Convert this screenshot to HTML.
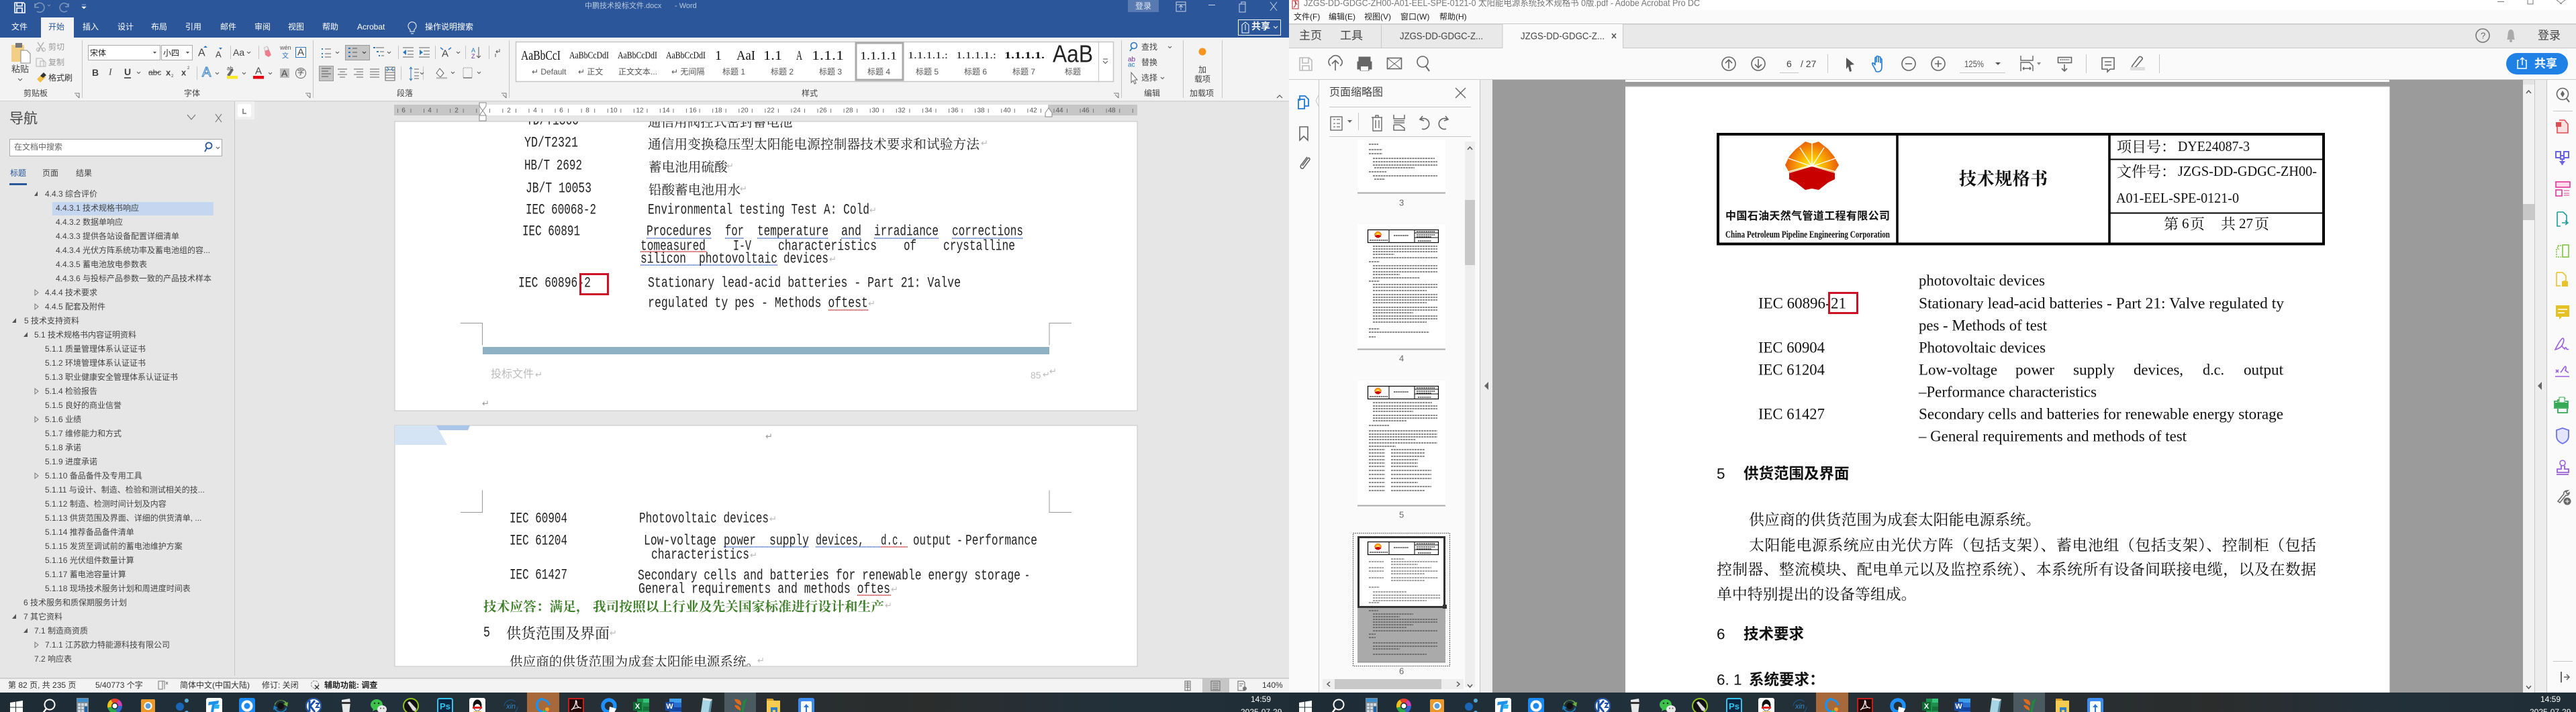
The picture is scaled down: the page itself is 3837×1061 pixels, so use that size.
<!DOCTYPE html>
<html lang="zh"><head><meta charset="utf-8"><title>Word and Acrobat</title>
<style>
html,body{margin:0;padding:0;width:3837px;height:1061px;overflow:hidden;background:#e6e6e6}
svg{display:block;position:absolute;left:0;top:0;font:12px "Liberation Sans","Noto Sans CJK SC",sans-serif}
text{dominant-baseline:central;fill:#444;white-space:pre}
.m{font:22px "Liberation Mono",monospace;fill:#222}
.c{font:19.6px "Noto Serif CJK SC",serif;fill:#222}
.s{font:23px "Liberation Serif",serif;fill:#111}
.p{font:22.9px "Noto Serif CJK SC",serif;fill:#111}
.h{font:bold 22.5px "Liberation Sans","Noto Sans CJK SC",sans-serif;fill:#111}
.w{fill:#fff}
.g{fill:#999}
.r{font-size:10px;fill:#555;text-anchor:middle}
.a{fill:#bbb;font-size:13px}
.n{fill:#444}
.pv{font:20px "Liberation Serif",serif;fill:#111}
.l{fill:#555}
.i{fill:none;stroke:#666;stroke-width:1.6}
.ib{fill:none;stroke:#555;stroke-width:1.2}
.sep{stroke:#c6c6c6;stroke-width:1}
.th{stroke:#222;stroke-width:1.3;stroke-dasharray:3 .9;fill:none;opacity:.85}
</style></head><body>
<svg width="3837" height="1061" viewBox="0 0 3837 1061">
<defs>
<linearGradient id="tg" x1="0" x2="1" y1="0" y2="0"><stop offset="0" stop-color="#1e2c36"/><stop offset=".3" stop-color="#21303a"/><stop offset=".72" stop-color="#2b2d2d"/><stop offset=".85" stop-color="#23303a"/><stop offset="1" stop-color="#1f2e37"/></linearGradient>
<radialGradient id="lg" gradientUnits="userSpaceOnUse" cx="40" cy="38" r="40"><stop offset="0" stop-color="#fff7a0"/><stop offset=".25" stop-color="#ffd400"/><stop offset=".6" stop-color="#f79a00"/><stop offset="1" stop-color="#e8590c"/></radialGradient>
<symbol id="logo" viewBox="0 0 80 73">
<path d="M30 1 40 4 50 1 64 12 73 23 80 36 73 47 40 37 6 47 0 36 6 23 16 12Z" fill="url(#lg)"/>
<path d="M6 48 40 38 74 48 74 57 64 62 50 73 40 71 30 73 16 62 6 57Z" fill="#c80000"/>
<path d="M40 38 22 10M40 38 5 26M40 38 40 3M40 38 58 10M40 38 75 26M4 46 40 36 76 46" stroke="#fff" stroke-width="1.3" fill="none"/>
</symbol>
<g id="tt"><rect x="15.5" y="8.5" width="105" height="19" fill="#fff" stroke="#000" stroke-width="1.2"/><path d="M47 8v20M85 8v20M85 13h36M85 20h36" stroke="#000"/><use href="#logo" x="25" y="10" width="11" height="11"/><path d="M18 24h27M54 17h22M88 11h28M88 16h28M88 19h22M90 25h20" stroke="#111" stroke-width="1.300" stroke-dasharray="2 .8"/></g>
<symbol id="t0" viewBox="0 0 24 24"><path d="M3 7 11 5.8v7.7H3ZM12 5.6 22 4v9.5H12ZM3 14.5h8v7.7L3 21ZM12 14.5h10V24L12 22.4Z" fill="#fff"/></symbol>
<symbol id="t1" viewBox="0 0 24 24"><circle cx="13" cy="10" r="7.5" fill="none" stroke="#fff" stroke-width="2"/><path d="M8 16 2 24" stroke="#fff" stroke-width="2.4"/></symbol>
<symbol id="t2" viewBox="0 0 24 24"><rect x="3" y="0" width="18" height="24" fill="#7c8b96"/><rect x="4" y="1" width="16" height="5" fill="#3c8fd0"/><path d="M5 8h4v4H5zM10 8h4v4h-4zM15 8h4v4h-4zM5 13h4v4H5zM10 13h4v4h-4zM5 18h4v4H5zM10 18h4v4h-4z" fill="#cfd8de"/><rect x="15" y="13" width="4" height="9" fill="#1e5fa8"/></symbol>
<symbol id="t3" viewBox="0 0 24 24"><g fill="none" stroke-width="6"><circle cx="12" cy="12" r="8" stroke="#36c" stroke-dasharray="10 60"/><circle cx="12" cy="12" r="8" stroke="#2ca84a" stroke-dasharray="13 60" stroke-dashoffset="-10"/><circle cx="12" cy="12" r="8" stroke="#f3c21a" stroke-dasharray="10 60" stroke-dashoffset="-23"/><circle cx="12" cy="12" r="8" stroke="#e8402e" stroke-dasharray="9 60" stroke-dashoffset="-33"/><circle cx="12" cy="12" r="8" stroke="#d23fb0" stroke-dasharray="9 60" stroke-dashoffset="-42"/></g><circle cx="12" cy="12" r="3.5" fill="#fff"/></symbol>
<symbol id="t4" viewBox="0 0 24 24"><rect x="2" y="2" width="21" height="20" rx="2" fill="#ea9a2c"/><circle cx="12.5" cy="12" r="6" fill="#fff"/><circle cx="12.5" cy="12" r="4" fill="#5a9ad6"/></symbol>
<symbol id="t5" viewBox="0 0 24 24"><circle cx="9" cy="13" r="6" fill="#1a65b8"/><circle cx="19" cy="4" r="3" fill="#5ba8d8"/><circle cx="19" cy="22" r="3" fill="#5ba8d8"/></symbol>
<symbol id="t6" viewBox="0 0 24 24"><rect width="24" height="24" rx="3" fill="#fff"/><path d="M4 6 19 4 18 9 13 10 11 21 7 21 9 10 3 11Z" fill="#1e90e6"/><path d="M13 10h7l-1 6h-7z" fill="#2ab5ee"/></symbol>
<symbol id="t7" viewBox="0 0 24 24"><rect width="24" height="24" rx="3" fill="#1b8af0"/><circle cx="12" cy="12" r="6.5" fill="none" stroke="#fff" stroke-width="4"/></symbol>
<symbol id="t8" viewBox="0 0 24 24"><path d="M4 12a8 8 0 0 1 15-4l-3 1 6 4 1-7-2 1A11 11 0 0 0 3 9Z" fill="#6cb33f"/><path d="M20 12a8 8 0 0 1-15 4l3-1-6-4-1 7 2-1a11 11 0 0 0 18 0Z" fill="#1a7fc2"/><circle cx="12" cy="12" r="5" fill="#111"/></symbol>
<symbol id="t9" viewBox="0 0 24 24"><circle cx="12" cy="12" r="12" fill="#fff"/><circle cx="12" cy="12" r="11" fill="none" stroke="#1b4fa8" stroke-width="2"/><path d="M6 4v16M7 12 14 4M7 12l7 9" stroke="#1b4fa8" stroke-width="3" fill="none"/><path d="M15 8h5l-4 6h5" stroke="#1b4fa8" stroke-width="2" fill="none"/></symbol>
<symbol id="t10" viewBox="0 0 24 24"><path d="M6 3 18 1 19 7 17 24H8L6 7Z" fill="#e8e8e8"/><path d="M6 6h13v3H6z" fill="#333"/></symbol>
<symbol id="t11" viewBox="0 0 24 24"><ellipse cx="9" cy="10" rx="9" ry="8" fill="#3cc24a"/><path d="M4 15 3 20 8 17Z" fill="#3cc24a"/><circle cx="6" cy="8" r="1.2" fill="#123"/><circle cx="12" cy="8" r="1.2" fill="#123"/><ellipse cx="17" cy="17" rx="7" ry="6" fill="#e8e8e8"/><circle cx="15" cy="15.5" r="1" fill="#555"/><circle cx="19.500" cy="15.5" r="1" fill="#555"/></symbol>
<symbol id="t12" viewBox="0 0 24 24"><circle cx="12" cy="12" r="11" fill="#111" stroke="#8fc31f" stroke-width="2"/><path d="M7 7l3-2 10 11-1 4-4-1Z" fill="#ddd"/></symbol>
<symbol id="t13" viewBox="0 0 24 24"><rect x="1" y="1" width="22" height="22" rx="2.500" fill="#0b2540" stroke="#31c5f0" stroke-width="2"/><text x="12" y="12.500" text-anchor="middle" font-size="13" font-weight="bold" style="fill:#31c5f0">Ps</text></symbol>
<symbol id="t14" viewBox="0 0 24 24"><rect width="24" height="24" rx="3" fill="#fff"/><ellipse cx="12" cy="11" rx="6.500" ry="8.500" fill="#111"/><ellipse cx="12" cy="14" rx="4.500" ry="5" fill="#fff"/><path d="M5 13h14v3H5z" fill="#e02020"/><path d="M7 20h4v3H5zM13 20h4l2 3h-6z" fill="#f5a623"/></symbol>
<symbol id="t15" viewBox="0 0 24 24"><circle cx="12" cy="13" r="10" fill="none" stroke="#1b5a92" stroke-width="1" stroke-dasharray="22 10"/><text x="12" y="13" text-anchor="middle" font-size="11" font-style="italic" style="fill:#2f86c8">xin</text></symbol>
<symbol id="t16" viewBox="0 0 24 24"><path d="M12 1a10 10 0 1 0 5 19" fill="none" stroke="#1e90ee" stroke-width="3.600"/><path d="M12 3a9 9 0 0 1 9 8" fill="none" stroke="#1e90ee" stroke-width="3"/><circle cx="18" cy="17" r="3" fill="#f2a01e"/><circle cx="13" cy="21" r="2.500" fill="#3dc15a"/><circle cx="22" cy="22" r="2.500" fill="#e84a3a"/></symbol>
<symbol id="t17" viewBox="0 0 24 24"><rect x="1" y="1" width="22" height="22" fill="#220808" stroke="#c0201c" stroke-width="2"/><path d="M5 18C9 15 12 9 11.500 5 11 3 13.500 4 13 8 12.500 12 16 15 20 15M7 16 17 14" fill="none" stroke="#f4e8e8" stroke-width="1.400"/></symbol>
<symbol id="t18" viewBox="0 0 24 24"><circle cx="12" cy="12" r="9" fill="none" stroke="#1e90ff" stroke-width="5.500"/><path d="M13 13 23 16 18 26 12 22Z" fill="#fff"/></symbol>
<symbol id="t19" viewBox="0 0 24 24"><rect x="6" y="1" width="18" height="23" fill="#1f8f4e"/><rect x="15" y="1" width="9" height="6" fill="#34c17a"/><rect x="15" y="13" width="9" height="6" fill="#15703a"/><rect x="0" y="6" width="13" height="13" fill="#0f6b36"/><text x="6.500" y="12.800" text-anchor="middle" font-size="11" font-weight="bold" class="w">X</text></symbol>
<symbol id="t20" viewBox="0 0 24 24"><rect x="6" y="1" width="18" height="23" fill="#2a6fd0"/><rect x="6" y="1" width="18" height="6" fill="#3fa0ee"/><rect x="6" y="14" width="18" height="6" fill="#16439c"/><rect x="0" y="6" width="13" height="13" fill="#184da6"/><text x="6.500" y="12.800" text-anchor="middle" font-size="11" font-weight="bold" class="w">W</text></symbol>
<symbol id="t21" viewBox="0 0 24 24"><path d="M6 0 20 2 17 24 3 21Z" fill="#a8d6e4"/><path d="M6 0 20 2 19 5 6 3Z" fill="#e8e8e8"/><path d="M17 6 20 2 17 24 14 23Z" fill="#5b8ea0"/></symbol>
<symbol id="t22" viewBox="0 0 24 24"><path d="M3 2C9 1 14 4 13 11 8 9 5 8 3 2ZM3 11C7 10 13 13 12 19 8 17 5 16 3 11Z" fill="#e0691a"/><path d="M22 0C19 8 17 14 16 24H9C13 21 15 14 16 5Z" fill="#1b8a3e"/></symbol>
<symbol id="t23" viewBox="0 0 24 24"><path d="M2 1h9l2 3h9v20H2Z" fill="#f8cc52"/><path d="M2 1h9l2 3H2Z" fill="#d59b22"/><rect x="8" y="14" width="10" height="10" fill="#2f81c6"/><rect x="11" y="18" width="4" height="6" fill="#f8cc52"/></symbol>
<symbol id="t24" viewBox="0 0 24 24"><rect width="24" height="24" rx="3" fill="#3b8cf2"/><rect x="4" y="5" width="16" height="19" rx="2" fill="#fff"/><path d="M12 9l-4 5h3v8h2v-8h3z" fill="#2a76d8"/></symbol>
<g id="tb">
<rect x="785" y="1032" width="48" height="29" fill="#a7683a"/><rect x="1079" y="1032" width="47" height="29" fill="#4b5960"/>
<use href="#t0" x="12" y="1040" width="24" height="24"/><use href="#t1" x="61" y="1040" width="24" height="24"/><use href="#t2" x="111" y="1040" width="24" height="24"/><use href="#t3" x="159" y="1040" width="24" height="24"/><use href="#t4" x="208" y="1040" width="24" height="24"/><use href="#t5" x="259" y="1040" width="24" height="24"/><use href="#t6" x="307" y="1040" width="24" height="24"/><use href="#t7" x="356" y="1040" width="24" height="24"/><use href="#t8" x="406" y="1040" width="24" height="24"/><use href="#t9" x="455" y="1040" width="24" height="24"/><use href="#t10" x="503" y="1040" width="24" height="24"/><use href="#t11" x="552" y="1040" width="24" height="24"/><use href="#t12" x="600" y="1040" width="24" height="24"/><use href="#t13" x="651" y="1040" width="24" height="24"/><use href="#t14" x="699" y="1040" width="24" height="24"/><use href="#t15" x="749" y="1040" width="24" height="24"/><use href="#t16" x="797" y="1040" width="24" height="24"/><use href="#t17" x="846" y="1040" width="24" height="24"/><use href="#t18" x="895" y="1040" width="24" height="24"/><use href="#t19" x="943" y="1040" width="24" height="24"/><use href="#t20" x="991" y="1040" width="24" height="24"/><use href="#t21" x="1041" y="1040" width="24" height="24"/><use href="#t22" x="1091" y="1040" width="24" height="24"/><use href="#t23" x="1140" y="1040" width="24" height="24"/><use href="#t24" x="1189" y="1040" width="24" height="24"/>
</g>
<clipPath id="cp1"><rect x="588" y="181" width="1107" height="431"/></clipPath>
<clipPath id="cp2"><rect x="588" y="634" width="1107" height="359"/></clipPath>
</defs>

<!-- WORD base -->
<rect width="1920" height="1061" fill="#e6e6e6"/>
<rect x="588" y="181" width="1106" height="431" fill="#fff" stroke="#c6c6c6"/>
<rect x="588" y="634" width="1106" height="359" fill="#fff" stroke="#c6c6c6"/>

<g clip-path="url(#cp1)">
<text class="m" x="784" y="180" textLength="78" lengthAdjust="spacingAndGlyphs">YD/T1360</text>
<text class="c" x="965" y="180">通信用阀控式密封蓄电池</text>
<text class="m" x="781" y="213" textLength="80" lengthAdjust="spacingAndGlyphs">YD/T2321</text>
<text class="c" x="965" y="213" textLength="494">通信用变换稳压型太阳能电源控制器技术要求和试验方法</text><text class="a" x="1461" y="213">↵</text>
<text class="m" x="781" y="247" textLength="86" lengthAdjust="spacingAndGlyphs">HB/T 2692</text>
<text class="c" x="966" y="247">蓄电池用硫酸</text><text class="a" x="1082" y="247">↵</text>
<text class="m" x="783" y="281" textLength="98" lengthAdjust="spacingAndGlyphs">JB/T 10053</text>
<text class="c" x="966" y="281">铅酸蓄电池用水</text><text class="a" x="1102" y="281">↵</text>
<text class="m" x="783" y="313" textLength="105" lengthAdjust="spacingAndGlyphs">IEC 60068-2</text>
<text class="m" x="965" y="313" textLength="330" lengthAdjust="spacingAndGlyphs">Environmental testing Test A: Cold</text><text class="a" x="1295" y="313">↵</text>
<text class="m" x="778" y="345" textLength="86" lengthAdjust="spacingAndGlyphs">IEC 60891</text>
<text class="m" x="963" y="345" textLength="97" lengthAdjust="spacingAndGlyphs">Procedures</text><text class="m" x="1080" y="345" textLength="28" lengthAdjust="spacingAndGlyphs">for</text><text class="m" x="1128" y="345" textLength="106" lengthAdjust="spacingAndGlyphs">temperature</text><text class="m" x="1253" y="345" textLength="30" lengthAdjust="spacingAndGlyphs">and</text><text class="m" x="1302" y="345" textLength="96" lengthAdjust="spacingAndGlyphs">irradiance</text><text class="m" x="1418" y="345" textLength="106" lengthAdjust="spacingAndGlyphs">corrections</text>
<path d="M963 355h97M1080 355h28M1128 355h106M1253 355h30M1302 355h96M1418 355h106M954 395h204" stroke="#3a62d0" stroke-width="1.500" stroke-dasharray="1.500 .8" fill="none"/>
<path d="M954 375h98M1234 462h59" stroke="#d02020" stroke-width="1.500" stroke-dasharray="1.500 .8" fill="none"/>
<text class="m" x="954" y="367" textLength="97" lengthAdjust="spacingAndGlyphs">tomeasured</text><text class="m" x="1092" y="367" textLength="27" lengthAdjust="spacingAndGlyphs">I-V</text><text class="m" x="1159" y="367" textLength="147" lengthAdjust="spacingAndGlyphs">characteristics</text><text class="m" x="1346" y="367" textLength="19" lengthAdjust="spacingAndGlyphs">of</text><text class="m" x="1405" y="367" textLength="107" lengthAdjust="spacingAndGlyphs">crystalline</text>
<text class="m" x="954" y="386" textLength="68" lengthAdjust="spacingAndGlyphs">silicon</text><text class="m" x="1041" y="386" textLength="117" lengthAdjust="spacingAndGlyphs">photovoltaic</text><text class="m" x="1167" y="386" textLength="67" lengthAdjust="spacingAndGlyphs">devices</text><text class="a" x="1235" y="386">↵</text>
<text class="m" x="772" y="422" textLength="108" lengthAdjust="spacingAndGlyphs">IEC 60896-2</text>
<rect x="864.500" y="408.500" width="41" height="30" fill="none" stroke="#ce1126" stroke-width="3"/>
<text class="m" x="965" y="422" textLength="466" lengthAdjust="spacingAndGlyphs">Stationary lead-acid batteries - Part 21: Valve</text>
<text class="m" x="965" y="452" textLength="328" lengthAdjust="spacingAndGlyphs">regulated ty pes - Methods oftest</text><text class="a" x="1293" y="452">↵</text>
<path d="M686 481.500h32.500v33M1596 481.500h-33v33" fill="none" stroke="#999"/>
<rect x="719" y="517" width="844" height="11" fill="#8fb1c4"/>
<text x="731" y="558" style="font-size:16px;fill:#bbb">投标文件</text><text class="a" x="797" y="558">↵</text>
<text x="1535" y="559" style="font-size:14px;fill:#bbb">85</text><text class="a" x="1553" y="558">↵</text><text class="a" x="1563" y="553">↵</text>
<text class="a" x="718" y="601" style="fill:#999">↵</text>
</g>

<g clip-path="url(#cp2)">
<path d="M588 634H650L666 663H588Z" fill="#d5e4f5"/><path d="M650 634H700L697 641H654Z" fill="#a9c6ea"/>
<text class="a" x="1140" y="650" style="fill:#999">↵</text>
<path d="M686 763.500h32.500v-33M1596 763.500h-33v-33" fill="none" stroke="#999"/>
<text class="m" x="759" y="773" textLength="86" lengthAdjust="spacingAndGlyphs">IEC 60904</text>
<text class="m" x="952" y="773" textLength="193" lengthAdjust="spacingAndGlyphs">Photovoltaic devices</text><text class="a" x="1146" y="773">↵</text>
<text class="m" x="759" y="806" textLength="86" lengthAdjust="spacingAndGlyphs">IEC 61204</text>
<text class="m" x="959" y="806" textLength="108" lengthAdjust="spacingAndGlyphs">Low-voltage</text><text class="m" x="1078" y="806" textLength="48" lengthAdjust="spacingAndGlyphs">power</text><text class="m" x="1146" y="806" textLength="59" lengthAdjust="spacingAndGlyphs">supply</text><text class="m" x="1215" y="806" textLength="72" lengthAdjust="spacingAndGlyphs">devices,</text><text class="m" x="1312" y="806" textLength="34" lengthAdjust="spacingAndGlyphs">d.c.</text><text class="m" x="1360" y="806" textLength="57" lengthAdjust="spacingAndGlyphs">output</text><text class="m" x="1425" y="806" textLength="9" lengthAdjust="spacingAndGlyphs">-</text><text class="m" x="1438" y="806" textLength="107" lengthAdjust="spacingAndGlyphs">Performance</text>
<path d="M1078 815h127M1215 815h97" stroke="#3a62d0" stroke-width="1.500" stroke-dasharray="1.500 .8" fill="none"/>
<path d="M1312 815h40M1277 887h50" stroke="#d02020" stroke-width="1.500" stroke-dasharray="1.500 .8" fill="none"/>
<text class="m" x="970" y="827" textLength="146" lengthAdjust="spacingAndGlyphs">characteristics</text><text class="a" x="1117" y="827">↵</text>
<text class="m" x="759" y="857" textLength="86" lengthAdjust="spacingAndGlyphs">IEC 61427</text>
<text class="m" x="950" y="858" textLength="570" lengthAdjust="spacingAndGlyphs">Secondary cells and batteries for renewable energy storage</text><text class="m" x="1526" y="858" textLength="8" lengthAdjust="spacingAndGlyphs">-</text>
<text class="m" x="951" y="878" textLength="375" lengthAdjust="spacingAndGlyphs">General requirements and methods oftes</text><text class="a" x="1327" y="878">↵</text>
<text x="720" y="902" textLength="597" style="font:bold 19.6px 'Noto Serif CJK SC',serif;fill:#3f7f2a">技术应答：满足， 我司按照以上行业及先关国家标准进行设计和生产</text><text class="a" x="1318" y="902">↵</text>
<text class="m" x="720" y="943" textLength="10" lengthAdjust="spacingAndGlyphs">5</text><text x="754" y="943" style="font:22px 'Noto Serif CJK SC',serif;fill:#222">供货范围及界面</text><text class="a" x="908" y="943">↵</text>
<text class="c" x="759" y="984" textLength="372">供应商的供货范围为成套太阳能电源系统。</text><text class="a" x="1128" y="984">↵</text>
</g>

<!-- word chrome -->
<rect width="1920" height="56" fill="#2b579a"/>
<rect x="61" y="26" width="49" height="30" fill="#f3f3f3"/>
<rect y="56" width="1920" height="94" fill="#f3f3f3"/>
<rect y="150" width="1920" height="1.500" fill="#d2d2d2"/>
<path d="M22 4h13l2 2v13H22ZM25 4v5h8V4M25 19v-7h8v7" fill="none" stroke="#fff" stroke-width="1.600"/>
<path d="M52 5v6h6M52 11a7 7 0 1 1 3 6" fill="none" stroke="#7f97bd" stroke-width="1.500"/><path d="M71 7l2 2 2-2" fill="none" stroke="#7f97bd"/>
<path d="M102 5v5h-5M102 10a6.500 6.500 0 1 0-2 6" fill="none" stroke="#7f97bd" stroke-width="1.500"/>
<path d="M122 7h6M122 10h6l-3 3z" fill="#fff" stroke="#fff" stroke-width=".6"/>
<text x="871" y="9" style="font-size:11px;fill:#b9c8de">中鹏技术投标文件.docx</text><text x="1005" y="9" style="font-size:11px;fill:#b9c8de">- Word</text>
<rect x="1680" y="0" width="46" height="18" fill="#587ab0"/><text x="1691" y="9" style="fill:#dfe7f2">登录</text>
<path d="M1752 3h14v14h-14ZM1752 7h14M1759 15v-6M1756 11l3-3 3 3" fill="none" stroke="#c7d3e6"/>
<path d="M1800 7.500h10" stroke="#c7d3e6"/><path d="M1846 6h9v12h-9zM1849 6V3h6v3" fill="none" stroke="#c7d3e6"/><path d="M1892 3l10 13M1902 3l-10 13" stroke="#c7d3e6"/>
<rect x="1844.500" y="29.500" width="63" height="23" fill="none" stroke="#fff"/><path d="M1850 37v12h10V37l-5-4zM1855 45v-9" fill="none" stroke="#fff"/><text x="1864" y="39" class="w" style="font-size:14px;font-weight:bold">共享</text><path d="M1897 39l3 3 3-3" fill="none" stroke="#fff"/>
<text class="w" x="17" y="40">文件</text><text x="72" y="40" style="fill:#2b579a">开始</text><text class="w" x="123" y="40">插入</text><text class="w" x="175" y="40">设计</text><text class="w" x="225" y="40">布局</text><text class="w" x="276" y="40">引用</text><text class="w" x="328" y="40">邮件</text><text class="w" x="379" y="40">审阅</text><text class="w" x="429" y="40">视图</text><text class="w" x="480" y="40">帮助</text><text class="w" x="532" y="40">Acrobat</text>
<path d="M611 44a6 6 0 1 1 6 0v3h-6ZM612 50h4" fill="none" stroke="#fff"/>
<text class="w" x="633" y="40">操作说明搜索</text>

<!-- clipboard -->
<rect x="17" y="67" width="19" height="25" fill="#f2cf85"/><rect x="23" y="64" width="10" height="7" fill="#777"/><path d="M31 75h9l5 5v14H31Z" fill="#fff" stroke="#888"/>
<text x="17" y="103" style="font-size:13px">粘贴</text><path d="M27 117l3 3 3-3" fill="none" stroke="#555"/>
<path d="M56 63l9 14M65 63l-9 14" stroke="#b3b3b3" stroke-width="1.500"/><circle cx="57" cy="74" r="2.500" fill="none" stroke="#b3b3b3"/><circle cx="65" cy="74" r="2.500" fill="none" stroke="#b3b3b3"/><text class="g" x="72" y="70">剪切</text>
<path d="M54 87h8l3 3v9H54ZM60 91h6l2 2v6h-8Z" fill="#f3f3f3" stroke="#b3b3b3"/><text class="g" x="72" y="93">复制</text>
<path d="M55 118l8-8 5 5-8 8z" fill="#f0c04a"/><path d="M60 113l5-5 4 4-5 4z" fill="#333"/><text x="72" y="116" style="fill:#333">格式刷</text>
<text x="35" y="139">剪贴板</text><path d="M111 139h7v7M113 141l5 5" fill="none" stroke="#777"/>
<path class="sep" d="M122.500 60v86M466.500 60v86M758.500 60v86M1670.500 60v86M1762.500 60v86M1820.500 60v86"/>
<!-- font -->
<rect x="131.500" y="67.500" width="107" height="22" fill="#fff" stroke="#ababab"/><rect x="240.500" y="67.500" width="46" height="22" fill="#fff" stroke="#ababab"/>
<text x="134" y="79" style="fill:#222">宋体</text><text x="243" y="79" style="fill:#222">小四</text><path d="M228 77h5l-2.500 3zM277 77h5l-2.500 3z" fill="#555"/>
<text x="295" y="79" style="font-size:16px">A</text><path d="M303 71l3-3 3 3z" fill="#2b78c2"/><text x="321" y="81" style="font-size:13px">A</text><path d="M326 71h5l-2.500 3z" fill="#2b78c2"/>
<path class="sep" d="M343.500 68v20M385.500 68v20M293.500 99v20"/>
<text x="347" y="78" style="font-size:14px">Aa</text><path d="M368 77l2.500 2.500 2.500-2.500" fill="none" stroke="#555"/>
<path d="M394 72l5-2 5 12-4 3-5-3z" fill="#ee7d8c"/><path d="M393 71l5-2 2 5-5 2z" fill="#eee" stroke="#999" stroke-width=".5"/>
<text x="417" y="71" style="font-size:9px;fill:#555">wén</text><text x="420" y="84" style="font-size:10px;fill:#2b78c2">文</text>
<rect x="440.500" y="70.500" width="15" height="15" fill="#fff" stroke="#2b78c2"/><text x="443" y="78" style="font-size:15px">A</text>
<text x="137" y="108" style="font-size:14px;font-weight:bold">B</text><text x="162" y="108" style="font:italic 14px 'Liberation Serif',serif">I</text><text x="185" y="107" style="font-size:14px;font-weight:bold">U</text><path d="M185 116h10" stroke="#333" stroke-width="1.500"/><path d="M204 107l2.500 2.500 2.500-2.500" fill="none" stroke="#555"/>
<text x="221" y="108" style="font-size:12px">abc</text><path d="M221 108h17" stroke="#444"/><text x="247" y="108" style="font-size:13px;font-weight:bold">x</text><text x="255" y="114" style="font-size:6px">2</text><text x="270" y="108" style="font-size:13px;font-weight:bold">x</text><text x="279" y="102" style="font-size:6px">2</text>
<text x="301" y="108" style="font-size:20px;fill:#fff;stroke:#2b78c2;stroke-width:1">A</text><path d="M321 108l2.500 2.500 2.500-2.500" fill="none" stroke="#555"/>
<path d="M338 112l7-10 3 2-6 10z" fill="#6a6a6a"/><text x="338" y="102" style="font-size:8px">ab</text><rect x="338" y="113" width="16" height="4.500" fill="#f7e92a"/><path d="M361 108l2.500 2.500 2.500-2.500" fill="none" stroke="#555"/>
<text x="380" y="106" style="font-size:15px">A</text><rect x="377" y="113" width="16" height="4.500" fill="#e60012"/><path d="M400 108l2.500 2.500 2.500-2.500" fill="none" stroke="#555"/>
<rect x="417" y="102" width="14" height="14" fill="#bdbdbd"/><text x="419" y="109" style="font-size:14px">A</text>
<circle cx="448" cy="109" r="7.500" fill="none" stroke="#666"/><text x="443" y="109" style="font-size:10px">字</text>
<text x="274" y="139">字体</text><path d="M455 139h7v7M457 141l5 5" fill="none" stroke="#777"/>
<!-- paragraph -->
<path d="M479 72h2v2h-2zM479 79h2v2h-2zM479 86h2v-2h-2z" fill="#2b78c2"/><path d="M484 73h9M484 80h9M484 85h9" stroke="#666"/><path d="M500 77l2.500 2.500 2.500-2.500" fill="none" stroke="#555"/>
<rect x="514.500" y="67.500" width="36" height="22" fill="#c6c6c6" stroke="#999"/><path d="M519 72h3M519 78h3M519 84h3" stroke="#2b78c2" stroke-width="2"/><path d="M525 72h7M525 78h7M525 84h7" stroke="#555"/><path d="M540 77l2.500 2.500 2.500-2.500" fill="none" stroke="#333"/>
<path d="M556 71h3M561 77h3M564 83h2" stroke="#2b78c2" stroke-width="2"/><path d="M560 71h12M566 77h6M568 83h4" stroke="#666"/><path d="M577 77l2.500 2.500 2.500-2.500" fill="none" stroke="#555"/>
<path class="sep" d="M593.500 68v20M648.500 68v20M693.500 68v20M597.500 99v20M630.500 99v20"/>
<path d="M600 71h16M607 76h9M607 81h9M600 85h16" stroke="#666"/><path d="M605 74l-5 4 5 4z" fill="#2b78c2"/><path d="M624 71h16M631 76h9M631 81h9M624 85h16" stroke="#666"/><path d="M625 74l5 4-5 4z" fill="#2b78c2"/>
<text x="658" y="80" style="font-size:15px">A</text><path d="M656 71l4 3M672 71l-4 3" stroke="#2b78c2" stroke-width="1.500"/><path d="M680 77l2.500 2.500 2.500-2.500" fill="none" stroke="#555"/>
<text x="702" y="75" style="font-size:9px;fill:#2b78c2">A</text><text x="702" y="84" style="font-size:9px;fill:#7030a0">Z</text><path d="M713 70v16M710 83l3 3 3-3" fill="none" stroke="#555"/>
<path class="sep" d="M728.500 68v20"/><path d="M744 73v4h-5M741 75l-2 2 2 2M738 80v5" fill="none" stroke="#555"/>
<rect x="475.500" y="98.500" width="21" height="22" fill="#c6c6c6" stroke="#999"/>
<path d="M479 102h14M479 106h10M479 110h14M479 114h10" stroke="#555"/><path d="M503 103h14M506 107h8M503 111h14M506 115h8M527 103h14M531 107h10M527 111h14M531 115h10M551 103h14M551 107h14M551 111h14M551 115h14" stroke="#666"/><path d="M574 100h14v20h-14zM574 104h14M574 108h14M574 112h14M574 116h14" fill="none" stroke="#666"/><path d="M576 100l3 3-3 3M586 100l-3 3 3 3" stroke="#2b78c2" fill="none"/>
<path d="M612 101v18M610 103l2-3 2 3M610 117l2 3 2-3" fill="none" stroke="#2b78c2"/><path d="M617 103h7M617 108h7M617 113h7M617 117h7" stroke="#666"/><path d="M626 108l2.500 2.500 2.500-2.500" fill="none" stroke="#555"/>
<path d="M655 102l6 7-5 6-6-6z" fill="#fff" stroke="#666"/><rect x="650" y="115" width="16" height="2.500" fill="#bbb"/><path d="M672 107l2.500 2.500 2.500-2.500" fill="none" stroke="#555"/>
<rect x="690" y="101" width="13" height="15" fill="none" stroke="#777" stroke-dasharray="1 1"/><path d="M690 116h13" stroke="#333"/><path d="M711 107l2.500 2.500 2.500-2.500" fill="none" stroke="#555"/>
<text x="591" y="139">段落</text><path d="M747 139h7v7M749 141l5 5" fill="none" stroke="#777"/>
<!-- styles -->
<rect x="768.500" y="62.500" width="890" height="59" fill="#fff" stroke="#c6c6c6" stroke-width="1.500"/>
<rect x="1275" y="64" width="70" height="55" fill="#fff" stroke="#aaa" stroke-width="3"/>
<text class="pv" x="776" y="83" textLength="59" lengthAdjust="spacingAndGlyphs" style="fill:#111">AaBbCcI</text>
<text class="pv" x="848" y="83" textLength="59" lengthAdjust="spacingAndGlyphs" style="font-size:15px">AaBbCcDdI</text><text class="pv" x="920" y="83" textLength="59" lengthAdjust="spacingAndGlyphs" style="font-size:15px">AaBbCcDdI</text><text class="pv" x="992" y="83" textLength="59" lengthAdjust="spacingAndGlyphs" style="font-size:15px">AaBbCcDdI</text>
<text class="pv" x="1065" y="83" textLength="10" lengthAdjust="spacingAndGlyphs">1</text><text class="pv" x="1097" y="83" textLength="28" lengthAdjust="spacingAndGlyphs">AaI</text>
<text class="pv" x="1137" y="83" textLength="28" lengthAdjust="spacingAndGlyphs">1.1</text><text class="pv" x="1186" y="83" textLength="9" lengthAdjust="spacingAndGlyphs">A</text>
<text class="pv" x="1209" y="83" textLength="48" lengthAdjust="spacingAndGlyphs">1.1.1</text>
<text class="pv" x="1281" y="83" textLength="55" lengthAdjust="spacingAndGlyphs" style="font-size:17px">1.1.1.1</text>
<text class="pv" x="1352" y="83" textLength="60" lengthAdjust="spacingAndGlyphs" style="font-size:15px">1.1.1.1.:</text><text class="pv" x="1424" y="83" textLength="60" lengthAdjust="spacingAndGlyphs" style="font-size:15px">1.1.1.1.:</text><text class="pv" x="1496" y="83" textLength="60" lengthAdjust="spacingAndGlyphs" style="font-size:15px;font-weight:bold">1.1.1.1.</text>
<text x="1568" y="80" textLength="60" lengthAdjust="spacingAndGlyphs" style="font-size:36px;fill:#222">AaB</text>
<text class="l" x="792" y="107">↵ Default</text><text class="l" x="861" y="107">↵ 正文</text><text class="l" x="921" y="107">正文文本...</text><text class="l" x="1000" y="107">↵ 无间隔</text>
<text class="l" x="1076" y="107">标题 1</text><text class="l" x="1148" y="107">标题 2</text><text class="l" x="1220" y="107">标题 3</text><text class="l" x="1292" y="107">标题 4</text><text class="l" x="1364" y="107">标题 5</text><text class="l" x="1436" y="107">标题 6</text><text class="l" x="1508" y="107">标题 7</text><text class="l" x="1586" y="107">标题</text>
<path class="sep" d="M1636.500 63v58"/><path d="M1643 88h7M1643 91l3.500 3.500 3.500-3.500" fill="none" stroke="#555"/>
<text x="1194" y="139">样式</text><path d="M1659 139h7v7M1661 141l5 5" fill="none" stroke="#777"/>
<circle cx="1689" cy="68" r="4.500" fill="none" stroke="#2b78c2" stroke-width="1.600"/><path d="M1686 72l-3 4" stroke="#2b78c2" stroke-width="1.800"/><text x="1700" y="70">查找</text><path d="M1740 69l2.500 2.500 2.500-2.500" fill="none" stroke="#555"/>
<text x="1680" y="89" style="font-size:10px;fill:#7030a0">ab</text><text x="1680" y="97" style="font-size:10px;fill:#2b78c2">ac</text><text x="1700" y="93">替换</text>
<path d="M1685 108v15l3-3 2 5 2-1-2-5h4z" fill="#fff" stroke="#666"/><text x="1700" y="116">选择</text><path d="M1729 115l2.500 2.500 2.500-2.500" fill="none" stroke="#555"/>
<text x="1704" y="139">编辑</text>
<circle cx="1791" cy="77" r="5.500" fill="#f7941d"/><text x="1785" y="104">加</text><text x="1779" y="118">载项</text><text x="1772" y="139">加载项</text>
<path d="M1902 146l4-4 4 4" fill="none" stroke="#444"/>
<!-- ruler -->
<rect x="350" y="151" width="29" height="27" fill="#f0f0f0"/><rect x="354" y="155" width="20" height="19" fill="#fff"/><path d="M362 162v7h5" fill="none" stroke="#777" stroke-width="1.600"/>
<rect x="587" y="156" width="128" height="16" fill="#c6c6c6"/><rect x="715" y="156" width="846" height="16" fill="#fff"/><rect x="1561" y="156" width="133" height="16" fill="#c6c6c6"/>
<path d="M590 165H1690" stroke="#777" stroke-width="6" stroke-dasharray="1 18.550" stroke-dashoffset="-1.950"/>
<g class="r"><text class="r" x="601" y="165">6</text><text class="r" x="640" y="165">4</text><text class="r" x="680" y="165">2</text><text class="r" x="758" y="165">2</text><text class="r" x="797" y="165">4</text><text class="r" x="836" y="165">6</text><text class="r" x="875" y="165">8</text><text class="r" x="914" y="165">10</text><text class="r" x="953" y="165">12</text><text class="r" x="992" y="165">14</text><text class="r" x="1032" y="165">16</text><text class="r" x="1070" y="165">18</text><text class="r" x="1109" y="165">20</text><text class="r" x="1148" y="165">22</text><text class="r" x="1187" y="165">24</text><text class="r" x="1226" y="165">26</text><text class="r" x="1265" y="165">28</text><text class="r" x="1304" y="165">30</text><text class="r" x="1343" y="165">32</text><text class="r" x="1383" y="165">34</text><text class="r" x="1422" y="165">36</text><text class="r" x="1461" y="165">38</text><text class="r" x="1500" y="165">40</text><text class="r" x="1539" y="165">42</text><text class="r" x="1578" y="165">44</text><text class="r" x="1617" y="165">46</text><text class="r" x="1656" y="165">48</text></g>
<path d="M714 153h10v5l-5 7 5 7v8h-10v-8l5-7-5-7z" fill="#fff" stroke="#888"/><path d="M714 172h10" stroke="#888"/><path d="M1557 174h10v-6l-5-7-5 7z" fill="#fff" stroke="#888"/>
<!-- nav -->
<rect x="0" y="151" width="349" height="859" fill="#e6e6e6"/><path class="sep" d="M349.500 151v856"/>
<text x="14" y="177" style="font-size:21px">导航</text>
<path d="M279 171l6 7 6-7M321 170l9 12M330 170l-9 12" fill="none" stroke="#666"/>
<rect x="14.500" y="207.500" width="316" height="25" fill="#fff" stroke="#aaa"/><text x="21" y="219" style="fill:#666">在文档中搜索</text>
<circle cx="311" cy="217" r="4.500" fill="none" stroke="#2b579a" stroke-width="1.800"/><path d="M308 221l-3 5" stroke="#2b579a" stroke-width="1.800"/><path d="M322 219l2.500 2.500 2.500-2.500" fill="none" stroke="#555"/>
<text x="15" y="258" style="fill:#2b579a">标题</text><text x="63" y="258">页面</text><text x="113" y="258">结果</text><rect x="14" y="273" width="26" height="3" fill="#2b579a"/>
<rect x="78" y="301" width="240" height="20" fill="#c5d7f0"/>
<g class="n">
<text x="67" y="289">4.4.3 综合评价</text>
<text x="83" y="310">4.4.3.1 技术规格书响应</text>
<text x="83" y="331">4.4.3.2 数据单响应</text>
<text x="83" y="352">4.4.3.3 提供各站设备配置详细清单</text>
<text x="83" y="373">4.4.3.4 光伏方阵系统功率及蓄电池组的容...</text>
<text x="83" y="394">4.4.3.5 蓄电池放电参数表</text>
<text x="83" y="415">4.4.3.6 与投标产品参数一致的产品技术样本</text>
<text x="67" y="436">4.4.4 技术要求</text>
<text x="67" y="457">4.4.5 配套及附件</text>
<text x="36" y="478">5 技术支持资料</text>
<text x="51" y="499">5.1 技术规格书内容证明资料</text>
<text x="67" y="520">5.1.1 质量管理体系认证证书</text>
<text x="67" y="541">5.1.2 环境管理体系认证证书</text>
<text x="67" y="562">5.1.3 职业健康安全管理体系认证证书</text>
<text x="67" y="583">5.1.4 检验报告</text>
<text x="67" y="604">5.1.5 良好的商业信誉</text>
<text x="67" y="625">5.1.6 业绩</text>
<text x="67" y="646">5.1.7 维修能力和方式</text>
<text x="67" y="667">5.1.8 承诺</text>
<text x="67" y="688">5.1.9 进度承诺</text>
<text x="67" y="709">5.1.10 备品备件及专用工具</text>
<text x="67" y="730">5.1.11 与设计、制造、检验和测试相关的技...</text>
<text x="67" y="751">5.1.12 制造、检测时间计划及内容</text>
<text x="67" y="772">5.1.13 供货范围及界面、详细的供货清单, ...</text>
<text x="67" y="793">5.1.14 推荐备品备件清单</text>
<text x="67" y="814">5.1.15 发货至调试前的蓄电池维护方案</text>
<text x="67" y="835">5.1.16 光伏组件数量计算</text>
<text x="67" y="856">5.1.17 蓄电池容量计算</text>
<text x="67" y="877">5.1.18 现场技术服务计划和周进度时间表</text>
<text x="35" y="898">6 技术服务和质保期服务计划</text>
<text x="35" y="919">7 其它资料</text>
<text x="51" y="940">7.1 制造商资质</text>
<text x="67" y="961">7.1.1 江苏欧力特能源科技有限公司</text>
<text x="51" y="982">7.2 响应表</text>
</g>
<path d="M56 285v7h-5zM24 474v7h-6zM41 495v7h-6zM24 915v7h-6zM41 936v7h-6z" fill="#555"/>
<path d="M52 432l5 4-5 4zM52 453l5 4-5 4zM52 579l5 4-5 4zM52 621l5 4-5 4zM52 705l5 4-5 4zM52 957l5 4-5 4z" fill="none" stroke="#777"/>
<!-- status -->
<rect y="1010" width="1920" height="23" fill="#f3f3f3"/><rect y="1010" width="1920" height="1.500" fill="#c6c6c6"/>
<text x="12" y="1021" style="fill:#333">第 82 页, 共 235 页</text><text x="142" y="1021" style="fill:#333">5/40773 个字</text>
<path d="M236 1015h6v12h-6zM242 1015h3v12" fill="none" stroke="#777"/><path d="M247 1016l3 4M250 1016l-3 4" stroke="#777"/>
<text x="268" y="1021" style="fill:#333">简体中文(中国大陆)</text><text x="390" y="1021" style="fill:#333">修订: 关闭</text>
<circle cx="469" cy="1020" r="5.500" fill="none" stroke="#888" stroke-dasharray="3 1.500"/><path d="M469 1021l6 6M475 1021l-6 6" stroke="#333" stroke-width="1.400"/>
<text x="483" y="1021" style="fill:#222;font-weight:bold">辅助功能: 调查</text>
<rect x="1791" y="1011" width="40" height="22" fill="#c6c6c6"/>
<path d="M1765 1015h8v14h-8ZM1769 1015v14M1766 1018h6M1766 1021h6M1766 1024h6" fill="none" stroke="#666"/><path d="M1804 1015h13v14h-13ZM1806 1018h9M1806 1021h9M1806 1024h9M1806 1027h9" fill="none" stroke="#666"/><path d="M1844 1015h8l2 2v12h-10ZM1846 1019h6M1846 1022h4" fill="none" stroke="#666"/><circle cx="1854" cy="1026" r="3" fill="#777"/>
<text x="1880" y="1021" style="fill:#333">140%</text>

<!-- ACROBAT -->
<rect x="1920" width="1917" height="15" fill="#fff"/>
<rect x="1920" y="15" width="1917" height="20" fill="#fafafa"/><rect x="1920" y="35" width="1917" height="1.500" fill="#c8c8c8"/>
<rect x="1920" y="36.500" width="1917" height="35" fill="#e9e9e9"/><rect x="1920" y="71" width="1917" height="1.500" fill="#c8c8c8"/>
<rect x="2238" y="36" width="179" height="36" fill="#fafafa"/><path d="M2238 36.500v35M2417.500 36.500v35M2057.500 36.500v35" stroke="#c8c8c8"/>
<rect x="1920" y="72" width="1917" height="46" fill="#fafafa"/><rect x="1920" y="118" width="1917" height="1.500" fill="#ccc"/>
<rect x="1920" y="119" width="44" height="913" fill="#fafafa"/><path class="sep" d="M1964.500 119v913"/>
<rect x="1965" y="119" width="239" height="913" fill="#fafafa"/>
<rect x="2204" y="119" width="19" height="913" fill="#ededed"/><path class="sep" d="M2204.500 119v913"/>
<rect x="2223" y="119" width="1535" height="913" fill="#9b9b9b"/>
<rect x="2421" y="119" width="1138" height="3" fill="#fff"/><rect x="2421" y="129" width="1138" height="903" fill="#fff"/>
<path d="M2421 129h1138M3559.500 129v903" stroke="#c6c6c6"/>
<rect x="3758" y="119" width="17" height="913" fill="#f2f2f2"/><rect x="3775" y="119" width="18" height="913" fill="#ededed"/><rect x="3793" y="119" width="44" height="913" fill="#fafafa"/><path class="sep" d="M3775.500 119v913M3793.500 119v913"/>
<path d="M1925 1h9v12h-9Z" fill="#fff" stroke="#c0201c"/><path d="M1927 11c3-2 3-5 2-9 0-1 2 4 3 5" fill="none" stroke="#c0201c"/>
<text x="1942" y="4" textLength="590" lengthAdjust="spacingAndGlyphs" style="font-size:14px;fill:#777">JZGS-DD-GDGC-ZH00-A01-EEL-SPE-0121-0 太阳能电源系统技术规格书 0版.pdf - Adobe Acrobat Pro DC</text>
<path d="M3720 2.500h10M3765 0v6h8V0M3808 0l8 6M3821 0l-8 6" fill="none" stroke="#777"/>
<text x="1927" y="25" style="fill:#222">文件(F)</text><text x="1979" y="25" style="fill:#222">编辑(E)</text><text x="2032" y="25" style="fill:#222">视图(V)</text><text x="2086" y="25" style="fill:#222">窗口(W)</text><text x="2144" y="25" style="fill:#222">帮助(H)</text>
<text x="1935" y="53" style="font-size:17px">主页</text><text x="1996" y="53" style="font-size:17px">工具</text>
<text x="2085" y="54" textLength="124" lengthAdjust="spacingAndGlyphs" style="font-size:15px">JZGS-DD-GDGC-Z...</text><text x="2265" y="54" textLength="125" lengthAdjust="spacingAndGlyphs" style="font-size:15px">JZGS-DD-GDGC-Z...</text><path d="M2401 50l6 7M2407 50l-6 7" stroke="#555" stroke-width="1.600"/>
<circle cx="3698" cy="53" r="10" fill="none" stroke="#777" stroke-width="1.600"/><text x="3695" y="53" style="font-size:13px;fill:#666">?</text>
<path d="M3734 59c2-3 1-8 2-11 1-3 2-4 4-4s3 1 4 4c1 3 0 8 2 11z" fill="#aaa"/><circle cx="3740" cy="61" r="2" fill="#aaa"/>
<text x="3780" y="53" style="font-size:17px">登录</text>
<!-- acro toolbar -->
<path d="M1936 86h14l4 4v15h-18ZM1940 86v8h9v-8M1940 105v-7h10v7" fill="none" stroke="#bbb" stroke-width="1.600"/>
<path d="M1982 98a7 7 0 0 1 1-12 8 8 0 0 1 14 2 6 6 0 0 1-1 10M1989 105V90M1984 95l5-5 5 5" fill="none" stroke="#666" stroke-width="1.600"/>
<path d="M2024 92V85h17v7M2022 92h21v11h-21ZM2026 100h13v5h-13Z" fill="#666" stroke="#666"/><rect x="2027" y="99" width="11" height="6" fill="#fff"/>
<rect x="2066.500" y="86.500" width="21" height="16" fill="none" stroke="#666" stroke-width="1.600"/><path d="M2067 87l20 16M2087 87l-20 16" stroke="#666"/>
<circle cx="2119" cy="92" r="8" fill="none" stroke="#666" stroke-width="1.600"/><path d="M2124 99l5 7" stroke="#666" stroke-width="2"/>
<circle cx="2575" cy="95" r="10" class="i"/><path d="M2575 102V89M2570 94l5-5 5 5" class="i"/>
<circle cx="2619" cy="95" r="10" class="i"/><path d="M2619 88v13M2614 96l5 5 5-5" class="i"/>
<text x="2661" y="95" style="font-size:14px">6</text><text x="2682" y="95" style="font-size:14px">/ 27</text><path class="sep" d="M2651 108.500h28M2722.500 81v28M3107.500 81v28M3216.500 81v28"/>
<path d="M2750 86l12 10-6 1 2 9-3 1-2-8-3 4z" fill="#555"/>
<path d="M2793 103c-2-4-5-7-4-9 1-1 3 1 4 3V87c0-2 2-2 2 0v6V85c0-2 3-2 3 0v8V86c0-2 3-2 3 0v8V89c0-2 2-2 2 0v10c0 5-2 8-6 8s-3-2-4-4z" fill="none" stroke="#1e78d8" stroke-width="1.600"/>
<circle cx="2843" cy="95" r="10" class="i"/><path d="M2838 95h10" class="i"/><circle cx="2887" cy="95" r="10" class="i"/><path d="M2882 95h10M2887 90v10" class="i"/>
<text x="2926" y="95" textLength="29" lengthAdjust="spacingAndGlyphs" style="font-size:14px;fill:#555">125%</text><path d="M2972 93h8l-4 4z" fill="#555"/><path class="sep" d="M2919 108.500h68"/>
<path d="M3010 83v7h18v-7M3010 106V93h13l5 5v8M3013 102h12M3013 102l2-2M3013 102l2 2M3025 102l-2-2M3025 102l-2 2" fill="none" stroke="#666" stroke-width="1.400"/><path d="M3034 93h6l-3 4z" fill="#888"/>
<rect x="3065.500" y="85.500" width="20" height="8" fill="none" stroke="#666" stroke-width="1.600"/><path d="M3069 89h13" stroke="#666" stroke-dasharray="1.500 1.500" stroke-width="2"/><path d="M3075 96v10M3071 102l4 4 4-4" class="i"/>
<path d="M3131 86h18v17h-6l-4 4v-4h-8ZM3135 92h10M3135 97h10" class="i"/>
<path d="M3176 98l10-13c2-2 6 1 5 3l-10 12-6 2z" class="i"/><rect x="3173" y="100" width="22" height="5" fill="#ddd"/>
<rect x="3733" y="79" width="92" height="32" rx="16" fill="#1f80e6"/><path d="M3752 90h-2v12h13V90h-2M3757 97v-11M3754 89l3-3 3 3" fill="none" stroke="#fff" stroke-width="1.500"/><text x="3775" y="95" class="w" style="font-size:17px;font-weight:bold">共享</text>
<!-- left rail -->
<path d="M1936 150v-7h8l5 5v10h-6M1934 148h9v14h-9Z" fill="#fff" stroke="#1e78d8" stroke-width="1.800"/>
<path d="M1964 142l-4 8 4 8" fill="#fafafa" stroke="#c6c6c6"/>
<path d="M1936 189h12v20l-6-6-6 6Z" class="i"/>
<path d="M1947 234l-9 12c-2 3 0 6 3 5l9-12c2-2 0-5-2-3l-8 11" class="i"/>
<text x="1980" y="138" style="font-size:16px">页面缩略图</text><path d="M2168 131l15 15M2183 131l-15 15" stroke="#666" stroke-width="1.400"/>
<path class="sep" d="M1980 159.500h211M1980 203.500h211M2023.500 168v26"/>
<rect x="1982" y="174" width="17" height="20" class="ib"/><path d="M1986 178h3M1986 184h3M1986 189h3M1991 178h5M1991 184h5M1991 189h5" stroke="#555"/><path d="M2007 179h7l-3.500 4z" fill="#666"/>
<path d="M2043 175h16M2049 175v-3h4v3M2045 175v20h13v-20M2049 179v12M2054 179v12" class="ib"/>
<path d="M2076 171v6h16v-6M2076 180h16M2076 183h16M2076 186h9l7 5v4M2076 186v8h16" fill="none" stroke="#555" stroke-width="1.300"/>
<path d="M2116 178a8 8 0 1 1 2 14M2119 173l-4 5 6 2" class="i"/><path d="M2156 178a8 8 0 1 0-2 14M2153 173l4 5-6 2" class="i"/>
<!-- thumbs -->
<rect x="2182" y="211" width="15" height="813" fill="#eee"/><rect x="2182" y="298" width="15" height="97" fill="#c8c8c8"/>
<path d="M2186 223l3.500-4 3.500 4M2186 1020l3.500 4 3.500-4" fill="none" stroke="#555" stroke-width="1.400"/>
<rect x="1970" y="1012" width="210" height="15" fill="#eee"/><rect x="1988" y="1012" width="159" height="15" fill="#c8c8c8"/>
<path d="M1981 1016l-4 3.500 4 3.500M2170 1016l4 3.500-4 3.500" fill="none" stroke="#555" stroke-width="1.400"/>
<rect x="2022" y="208" width="131" height="79" fill="#fff"/><path d="M2022 287.500h131" stroke="#aaa" stroke-width="2"/>
<path class="th" d="M2039 215h14M2039 223h20M2039 229h20M2045 236h92M2045 241h96M2045 246h96M2047 250h60M2039 256h26M2045 262h96M2047 267h16"/>
<text x="2084" y="302" style="fill:#666;font-size:13px">3</text>
<rect x="2022" y="334" width="131" height="186" fill="#fff"/><path d="M2022 520.500h131" stroke="#aaa" stroke-width="2"/><use href="#tt" x="2022" y="334"/>
<path class="th" d="M2045 367h96M2045 371h96M2045 375h96M2045 379h32M2045 384h96M2039 390h16M2045 396h96M2045 400h96M2045 405h96M2045 409h40M2045 414h70M2039 419h16M2045 424h96M2045 428h96M2045 433h80M2045 439h96M2045 443h96M2045 447h96M2045 451h80M2045 458h96M2045 462h96M2045 466h60M2045 471h96M2045 475h96M2045 480h80M2039 490h16M2039 495h90M2039 502h10"/>
<text x="2084" y="534" style="fill:#666;font-size:13px">4</text>
<rect x="2022" y="567" width="131" height="186" fill="#fff"/><path d="M2022 753.500h131" stroke="#aaa" stroke-width="2"/><use href="#tt" x="2022" y="567"/>
<path class="th" d="M2045 600h88M2045 605h96M2045 609h96M2045 613h60M2045 619h96M2045 623h96M2045 627h50M2039 634h30M2039 642h102M2039 647h102M2039 651h102M2039 655h70M2039 660h102M2039 665h40M2039 670h24M2072 670h50M2039 675h24M2072 675h50M2039 680h24M2072 680h50M2039 685h24M2072 685h40M2039 690h24M2072 690h40M2039 695h24M2072 695h40M2039 701h24M2072 701h60M2039 707h24M2072 707h60M2039 713h24M2072 713h60M2039 719h24M2072 719h40M2039 725h24M2072 725h60M2039 731h24M2072 731h50"/>
<text x="2084" y="767" style="fill:#666;font-size:13px">5</text>
<rect x="2022" y="799" width="131" height="187" fill="#fff"/><rect x="2022" y="904" width="131" height="82" fill="#aaa"/><path d="M2022 986.500h131" stroke="#999" stroke-width="2"/><use href="#tt" x="2022" y="799"/>
<path class="th" d="M2072 833h20M2039 837h22M2072 837h70M2072 841h40M2039 846h22M2072 846h60M2039 851h22M2072 851h70M2072 855h50M2039 861h22M2072 861h70M2072 865h50M2039 875h16M2045 882h50M2045 887h100M2045 891h100M2045 895h80M2039 898h16M2039 910h14M2045 915h60M2045 919h40M2045 923h96M2045 927h96M2045 931h60M2045 935h50M2045 940h96M2039 945h10M2039 950h10M2045 958h96M2045 963h96M2045 967h40M2045 975h80" style="stroke-width:1.100"/>
<rect x="2023.500" y="800.500" width="128" height="104" fill="none" stroke="#333" stroke-width="3"/><rect x="2149" y="901" width="6" height="6" fill="#333"/>
<rect x="2015.500" y="794.500" width="144" height="198" fill="none" stroke="#333" stroke-dasharray="1.500 1.500"/>
<text x="2084" y="1000" style="fill:#666;font-size:13px">6</text>
<path d="M2217 569l-6 6 6 6zM3786 569l-6 6 6 6z" fill="#666"/>
<!-- PDF table -->
<path d="M2559 200H3461V363.500H2559Z" fill="none" stroke="#000" stroke-width="4"/>
<path d="M2826 200v164M3142 200v164" stroke="#000" stroke-width="3.500"/>
<path d="M3142 237.500h319M3142 317.500h319" stroke="#000" stroke-width="2"/>
<use href="#logo" x="2659" y="210" width="80" height="73"/>
<text x="2570" y="320" textLength="245" lengthAdjust="spacing" style="font:bold 16px 'Noto Sans CJK SC',sans-serif;fill:#111">中国石油天然气管道工程有限公司</text>
<text x="2570" y="350" textLength="245" lengthAdjust="spacingAndGlyphs" style="font:bold 15px 'Liberation Serif',serif;fill:#111">China Petroleum Pipeline Engineering Corporation</text>
<text x="2918" y="265" textLength="132" style="font:bold 26px 'Noto Serif CJK SC',serif;fill:#111">技术规格书</text>
<text class="p" x="3153" y="218" style="font-size:22px">项目号：</text><text class="s" x="3244" y="218" textLength="107" lengthAdjust="spacingAndGlyphs" style="font-size:21px">DYE24087-3</text>
<text class="p" x="3153" y="255" style="font-size:22px">文件号：</text><text class="s" x="3244" y="255" textLength="207" lengthAdjust="spacingAndGlyphs" style="font-size:21px">JZGS-DD-GDGC-ZH00-</text>
<text class="s" x="3152" y="295" textLength="183" lengthAdjust="spacingAndGlyphs" style="font-size:21px">A01-EEL-SPE-0121-0</text>
<text class="p" x="3223" y="333" style="font-size:22px">第</text><text class="s" x="3250" y="333" style="font-size:21px">6</text><text class="p" x="3262" y="333" style="font-size:22px">页</text><text class="p" x="3308" y="333" style="font-size:22px">共</text><text class="s" x="3335" y="333" style="font-size:21px">27</text><text class="p" x="3358" y="333" style="font-size:22px">页</text>
<!-- PDF body -->
<text class="s" x="2858" y="418" textLength="188" lengthAdjust="spacingAndGlyphs">photovoltaic devices</text>
<text class="s" x="2619" y="452" textLength="100" lengthAdjust="spacingAndGlyphs">IEC 60896</text><text class="s" x="2719" y="452">-</text><text class="s" x="2727" y="452">21</text>
<rect x="2724.500" y="436.500" width="42" height="30" fill="none" stroke="#ce1126" stroke-width="3"/>
<text class="s" x="2858" y="452" textLength="544" lengthAdjust="spacingAndGlyphs">Stationary lead-acid batteries - Part 21: Valve regulated ty</text>
<text class="s" x="2858" y="485" textLength="191" lengthAdjust="spacingAndGlyphs">pes - Methods of test</text>
<text class="s" x="2619" y="518" textLength="99" lengthAdjust="spacingAndGlyphs">IEC 60904</text><text class="s" x="2858" y="518" textLength="189" lengthAdjust="spacingAndGlyphs">Photovoltaic devices</text>
<text class="s" x="2619" y="551" textLength="99" lengthAdjust="spacingAndGlyphs">IEC 61204</text>
<text class="s" x="2858" y="551" textLength="117" lengthAdjust="spacingAndGlyphs">Low-voltage</text><text class="s" x="3002" y="551" textLength="58" lengthAdjust="spacingAndGlyphs">power</text><text class="s" x="3088" y="551" textLength="62" lengthAdjust="spacingAndGlyphs">supply</text><text class="s" x="3178" y="551" textLength="74" lengthAdjust="spacingAndGlyphs">devices,</text><text class="s" x="3281" y="551" textLength="32" lengthAdjust="spacingAndGlyphs">d.c.</text><text class="s" x="3342" y="551" textLength="59" lengthAdjust="spacingAndGlyphs">output</text>
<text class="s" x="2858" y="584" textLength="265" lengthAdjust="spacingAndGlyphs">–Performance characteristics</text>
<text class="s" x="2619" y="617" textLength="99" lengthAdjust="spacingAndGlyphs">IEC 61427</text><text class="s" x="2858" y="617" textLength="543" lengthAdjust="spacingAndGlyphs">Secondary cells and batteries for renewable energy storage</text>
<text class="s" x="2858" y="650" textLength="399" lengthAdjust="spacingAndGlyphs">– General requirements and methods of test</text>
<text class="h" x="2557" y="706" style="font-weight:400">5</text><text class="h" x="2597" y="706">供货范围及界面</text>
<text class="p" x="2605" y="773">供应商的供货范围为成套太阳能电源系统。</text>
<text class="p" x="2605" y="811" textLength="845">太阳能电源系统应由光伏方阵（包括支架）、蓄电池组（包括支架）、控制柜（包括</text>
<text class="p" x="2557" y="847" textLength="893">控制器、整流模块、配电单元以及监控系统）、本系统所有设备间联接电缆，以及在数据</text>
<text class="p" x="2557" y="884">单中特别提出的设备等组成。</text>
<text class="h" x="2557" y="945" style="font-weight:400">6</text><text class="h" x="2597" y="945">技术要求</text>
<text class="h" x="2557" y="1013" style="font-weight:400">6. 1</text><text class="h" x="2605" y="1013">系统要求：</text>
<!-- right scroll -->
<rect x="3758" y="119" width="17" height="7" fill="#e4e4e4"/><rect x="3758" y="304" width="17" height="24" fill="#c8c8c8"/>
<path d="M3763 139l3.500-4 3.500 4M3763 1022l3.500 4 3.500-4" fill="none" stroke="#555" stroke-width="1.400"/>
<!-- right rail -->
<circle cx="3817" cy="140" r="8.500" class="i"/><path d="M3817 135l-3 5 3 5zM3817 135l3 5-3 5" fill="#666"/><path d="M3823 147l4 5" stroke="#666" stroke-width="2"/>
<path class="sep" d="M3803 165.500h29M3803 985.500h29"/>
<path d="M3812 179h8l5 6v13h-16v-12" fill="#fbe0e0" stroke="#e14b52" stroke-width="1.600"/><rect x="3807" y="182" width="8" height="7" fill="#e14b52"/>
<path d="M3807 226h7v9h-7ZM3819 226h7v9h-7ZM3814 232h5v5h-5ZM3816.500 237v9" fill="none" stroke="#6b62e8" stroke-width="2"/><path d="M3812 240l4.500 6 4.500-6" fill="#6b62e8"/>
<rect x="3807" y="271" width="21" height="8" fill="#fbdbec" stroke="#e0389a" stroke-width="1.600"/><rect x="3807" y="283" width="9" height="9" fill="none" stroke="#e0389a" stroke-width="1.600"/><path d="M3819 284h8M3819 288h8M3819 291h8" stroke="#e0389a"/>
<path d="M3809 316h9l5 5v9M3809 316v21h5M3816 332h9M3821 329l4 3-4 3" fill="none" stroke="#1e9a9a" stroke-width="1.600"/>
<rect x="3817" y="365" width="9" height="18" fill="none" stroke="#7dc63f" stroke-width="1.600"/><path d="M3815 366h-7M3808 371v12h7" fill="none" stroke="#7dc63f" stroke-width="1.600" stroke-dasharray="2 1.500"/><path d="M3812 366l-3 3 3 3" fill="none" stroke="#7dc63f"/>
<path d="M3808 406h9l5 5v8h-4M3808 406v20h6" fill="none" stroke="#e8c22a" stroke-width="1.600"/><rect x="3816" y="419" width="9" height="8" fill="#e8c22a"/>
<path d="M3807 455h20v17h-11l-4 4v-4h-5Z" fill="#e5c124"/><path d="M3810 461h14M3810 466h10" stroke="#fff" stroke-width="1.500"/>
<path d="M3806 521c3-6 7-14 11-17 3 0 2 6-1 11-2 3-6 5-10 6zM3816 515c1 3 3 4 4 5 1-3 2-3 3 0 1 1 2 1 3 0" fill="none" stroke="#9b5fdd" stroke-width="1.600"/>
<path d="M3807 551l4 4M3811 551l-4 4M3814 555c3-3 5-8 7-9 2 1 1 4 0 6 2 1 3 3 5 3M3806 561h21" fill="none" stroke="#9b5fdd" stroke-width="1.600"/>
<path d="M3810 601v-5h8l3-3M3821 598h4v10h-20v-10h4M3810 609v6h14v-6" fill="none" stroke="#34a853" stroke-width="1.800"/><rect x="3806" y="600" width="19" height="7" fill="#34a853"/><rect x="3812" y="592" width="8" height="8" fill="#fff" stroke="#34a853"/>
<path d="M3817 638l9 3v9c0 6-4 9-9 11-5-2-9-5-9-11v-9Z" fill="#e4e6ff" stroke="#6b72e8" stroke-width="1.800"/>
<circle cx="3817" cy="690" r="4" class="i" style="stroke:#9b5fdd"/><path d="M3815 694v5h-6v5h17v-5h-6v-5M3808 707h18" fill="none" stroke="#9b5fdd" stroke-width="1.800"/>
<path d="M3825 731l-3 2 2 3 3-2c0 3-3 5-5 4l-9 11-3-2 9-11c-1-3 2-5 6-5Z" fill="none" stroke="#666" stroke-width="1.500"/><circle cx="3824" cy="747" r="5.500" fill="#666"/><path d="M3821 747h6M3824 744v6" stroke="#fff"/>
<path d="M3815 1001v16" stroke="#666" stroke-width="2"/><path d="M3819 1009h8M3823 1005l4 4-4 4" fill="none" stroke="#666" stroke-width="1.500"/>

<!-- taskbar -->
<rect y="1032" width="1920" height="29" fill="url(#tg)"/><rect x="1920" y="1032" width="1917" height="29" fill="url(#tg)"/>
<use href="#tb"/><use href="#tb" x="1920"/>
<text class="w" x="1863" y="1042" style="font-size:12px">14:59</text><text class="w" x="1848" y="1061" style="font-size:12px">2025-07-29</text>
<text class="w" x="3784" y="1042" style="font-size:12px">14:59</text><text class="w" x="3768" y="1061" style="font-size:12px">2025-07-29</text>
</svg>
</body></html>
